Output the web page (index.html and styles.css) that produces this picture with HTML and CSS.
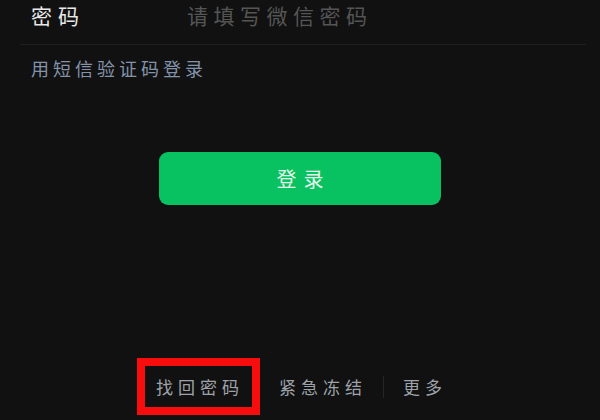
FILE: index.html
```html
<!DOCTYPE html>
<html lang="zh-CN">
<head>
    <meta charset="UTF-8" />
    <title>登录</title>
    <link rel="stylesheet" href="styles.css">
</head>
<body>
    <div class="login">
        <div class="field">
            <span class="field-label">密码</span>
            <span class="field-input">请填写微信密码</span>
        </div>
        <div class="sms-link">用短信验证码登录</div>

        <div class="login-btn">登录</div>

        <div class="links">
            <span class="link marked">找回密码</span>
            <span class="sep"></span>
            <span class="link">紧急冻结</span>
            <span class="sep"></span>
            <span class="link">更多</span>
        </div>
    </div>
</body>
</html>
```

FILE: styles.css
```css
html, body {
    margin: 0;
    height: 100%;
    background: #111111;
}
.login {
    height: 420px;
    display: flex;
    flex-direction: column;
    font-family: "Noto Sans CJK SC", "Noto Sans", sans-serif;
}
.field {
    display: flex;
    align-items: flex-start;
    height: 44px;
    margin: 0 14px 0 20px;
    padding-left: 11px;
    border-bottom: 1px solid #1f1f1f;
    font-size: 21px;
    line-height: 30px;
}
.field-label {
    width: 156px;
    color: #e8e8e8;
    letter-spacing: 6px;
}
.field-input {
    color: #555555;
    letter-spacing: 5.5px;
}
.sms-link {
    margin: 11px 0 0 31px;
    font-size: 18px;
    line-height: 24px;
    letter-spacing: 4px;
    color: #8393aa;
}
.login-btn {
    width: 282px;
    height: 53px;
    margin: 72px auto 0;
    border-radius: 9px;
    background: #08c160;
    color: #e4f7ea;
    font-size: 20px;
    letter-spacing: 7px;
    text-indent: 7px;
    display: flex;
    align-items: center;
    justify-content: center;
}
.links {
    margin-top: auto;
    margin-bottom: 5px;
    display: flex;
    justify-content: center;
    align-items: center;
    height: 57px;
}
.link {
    padding: 0 16px 0 19px;
    font-size: 17px;
    line-height: 24px;
    letter-spacing: 5px;
    color: #9ea3aa;
}
.sep {
    width: 1px;
    height: 22px;
    background: #262626;
}
/* red annotation box around the first link */
.marked {
    height: 57px;
    box-sizing: border-box;
    border: 8px solid #f70d0d;
    padding: 0 8px 0 11px;
    display: flex;
    align-items: center;
    position: relative;
    z-index: 1;
    margin-right: -1px;
}
```
